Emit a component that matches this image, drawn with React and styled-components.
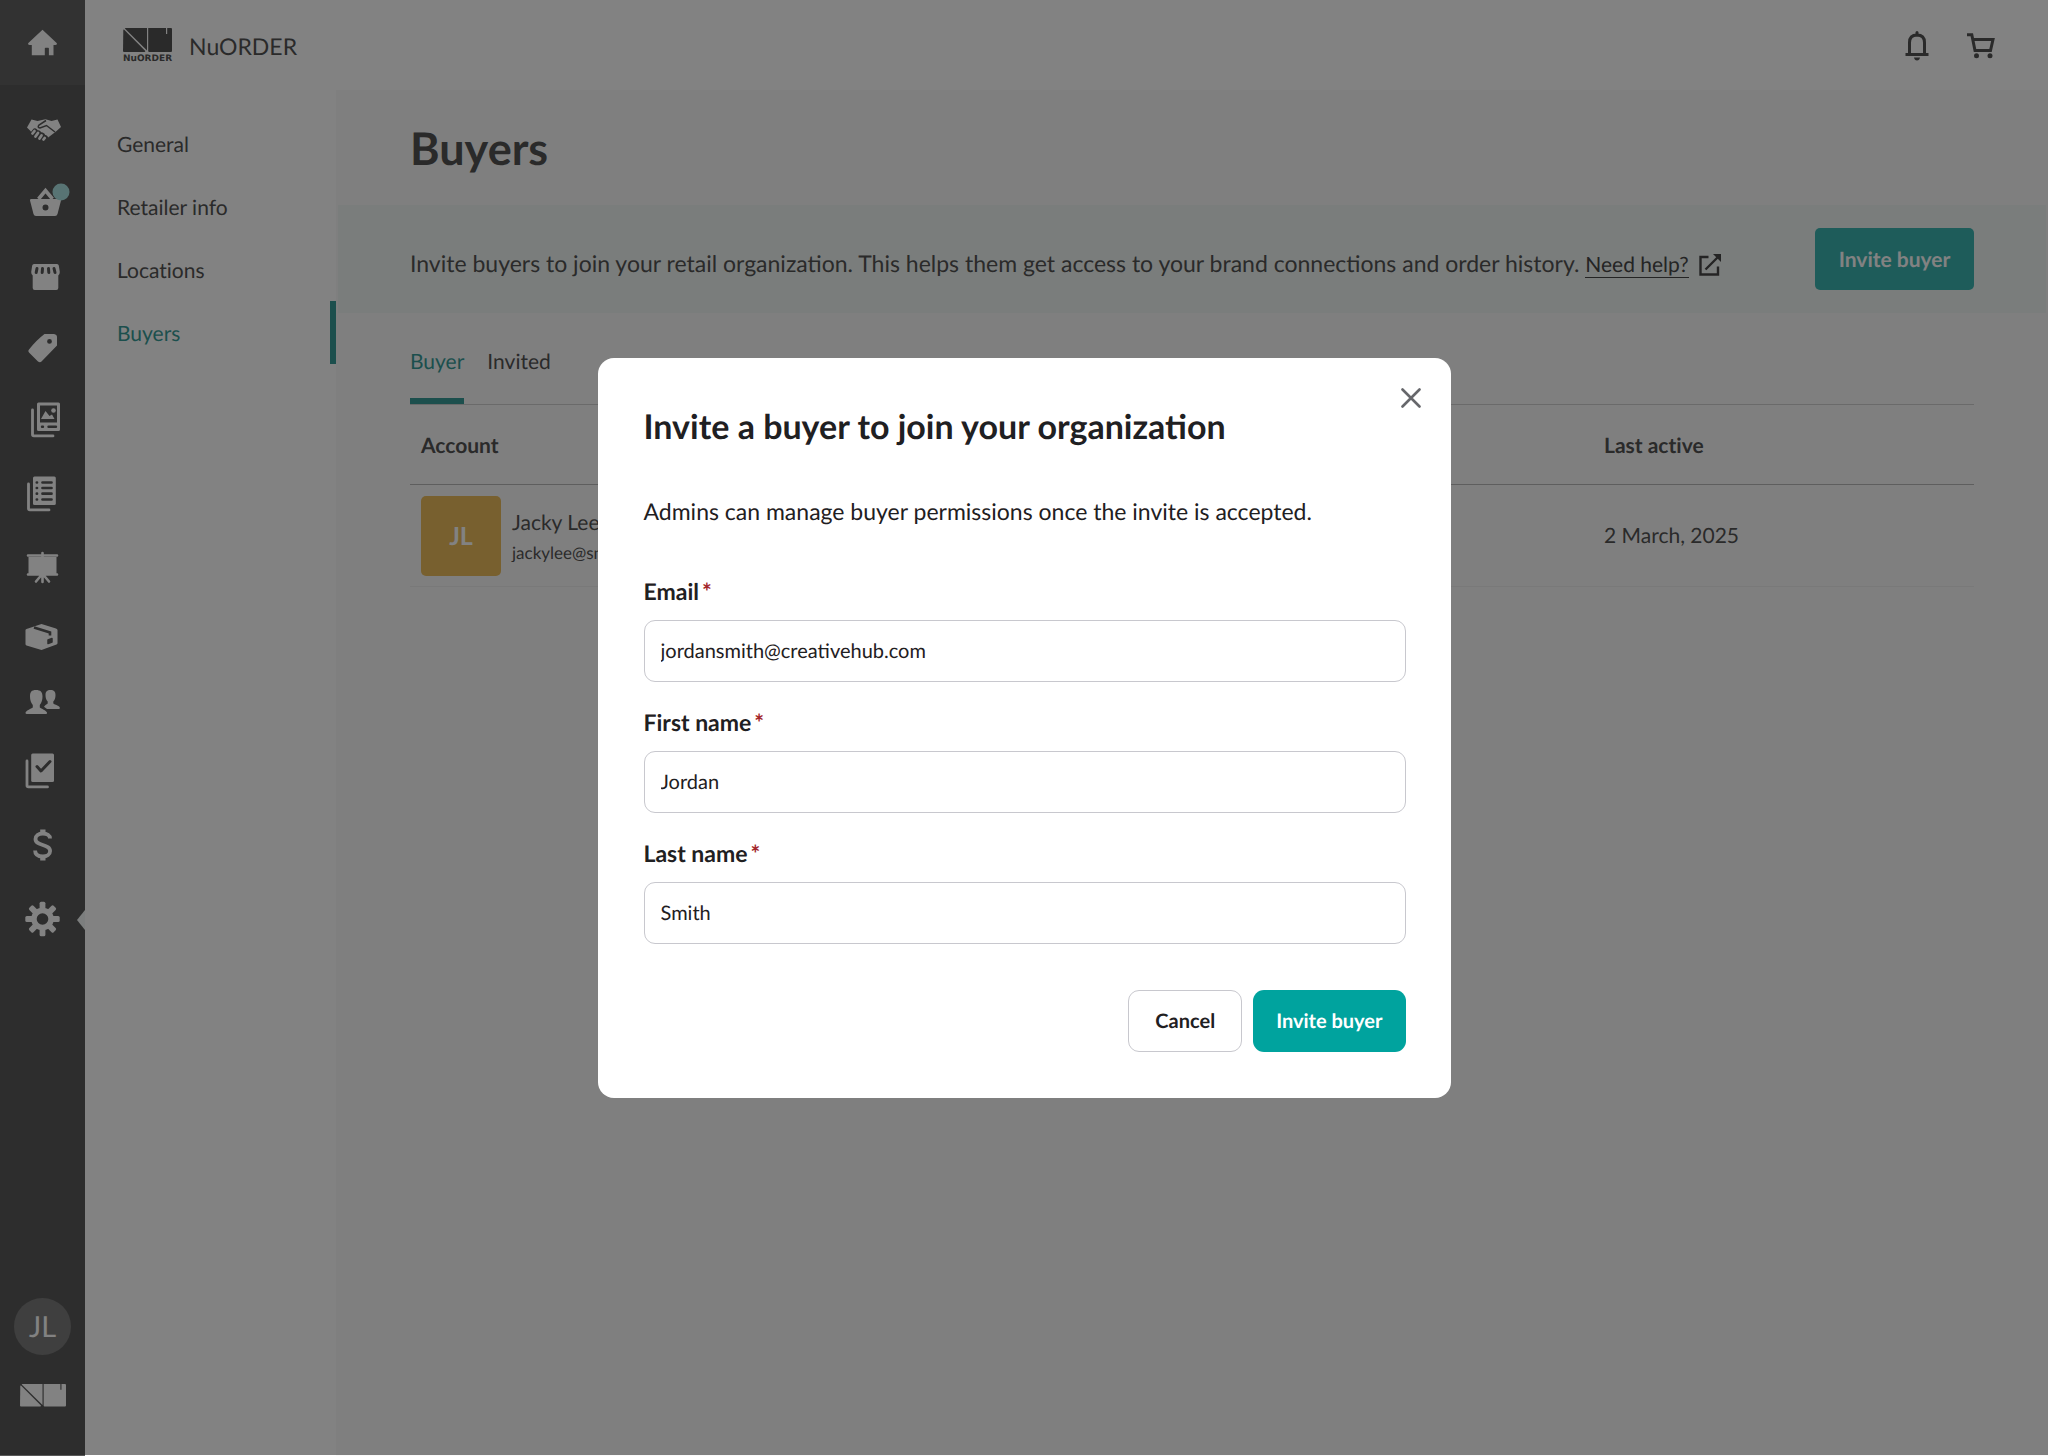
import React, { useState } from "react";
import styled, { createGlobalStyle } from "styled-components";

const color = {
  ink: "#1f2022",
  dimInk: "#545454",
  teal: "#00a39e",
  brand: "#3bb4b0",
  accent: "#389c98",
  rail: "#595959",
  railIcon: "#ffffff",
  line: "#c8c8ce",
};

const GlobalStyle = createGlobalStyle`
  *, *::before, *::after { box-sizing: border-box; }
  body {
    margin: 0;
    font-family: Lato, "Liberation Sans", sans-serif;
    text-rendering: geometricPrecision;
    color: ${color.dimInk};
    background: #fff;
  }
  button, input { font: inherit; color: inherit; text-rendering: inherit; }
  a { color: inherit; text-decoration: none; }
  ul { list-style: none; margin: 0; padding: 0; }
  h1, h2, p { margin: 0; }
`;

const Shell = styled.div`
  display: flex;
  min-height: 100vh;
`;

/* ---------- icon rail ---------- */

const Rail = styled.nav`
  flex: 0 0 85px;
  display: flex;
  flex-direction: column;
  background: ${color.rail};
  color: ${color.railIcon};
`;

const HomeLink = styled.a`
  display: grid;
  place-items: center;
  height: 85px;
  margin-bottom: 9px;
  background: #636363;
`;

const RailLink = styled.a`
  position: relative;
  display: grid;
  place-items: center;
  height: ${(p) => p.$height}px;

  &[aria-current="page"]::after {
    content: "";
    position: absolute;
    right: 0;
    top: 50%;
    border: solid transparent;
    border-width: 10px 8px 10px 0;
    border-right-color: #f4f8f7;
    transform: translateY(-50%);
  }
`;

const RailIcon = styled.svg`
  display: block;
  width: 43px;
  height: 44px;
  overflow: visible;
  fill: currentColor;
`;

const RailFooter = styled.div`
  display: flex;
  flex-direction: column;
  align-items: center;
  gap: 29px;
  margin-top: auto;
  padding-bottom: 49px;
`;

const UserBadge = styled.a`
  display: grid;
  place-items: center;
  width: 57px;
  height: 57px;
  border-radius: 50%;
  background: #7c7c7c;
  font-size: 29px;
`;

const Glyph = ({ children }) => (
  <RailIcon viewBox="-21.5 -22 43 44" aria-hidden="true">
    {children}
  </RailIcon>
);

const HomeIcon = () => (
  <Glyph>
    <path d="M0 -13.2L14.4 0.2Q14.8 2 13 2H11V12.2H6.400V5.500Q6.400 4.800 5.700 4.800H3Q2.300 4.800 2.300 5.500V12.200H-10.700V2H-13Q-14.800 2 -14.400 0.200Z" />
  </Glyph>
);

const HandshakeIcon = () => (
  <Glyph>
    <path d="M-11 -10.500L-5 -9L3 -10.800L9 -9L15 -10.500L18.500 -3L13.500 1.500L3 9.500L1 10.500L-8 6L-12.500 0.500L-15.500 -2.500Z" />
    <path
      d="M3.500 -9.500L-3.500 -5Q-5.500 -2.500 -2.500 -2L4 -4.500L12.500 2"
      fill="none"
      stroke={color.rail}
      strokeWidth="1.500"
    />
    <g stroke={color.rail} strokeWidth="6" strokeLinecap="round">
      <path d="M-7.500 1.500L-9.500 4M-4 3.500L-6 6M-0.500 5.500L-2 8M2.500 8L1.500 9.500" />
    </g>
    <g stroke={color.railIcon} strokeWidth="2.800" strokeLinecap="round">
      <path d="M-8 1L-10 3.500M-4.500 3L-7 6.500M-1 5.500L-3 8.500M2.200 8L1 9.500" />
    </g>
  </Glyph>
);

const BasketIcon = () => (
  <Glyph>
    <path
      d="M-4 -3L3 -11.500L10 -3"
      fill="none"
      stroke="currentColor"
      strokeWidth="3.600"
    />
    <path
      fillRule="evenodd"
      d="M-11.500 -3H17.500Q18.800 -3 18.500 -1.500L15 12Q14.500 14 12.500 14H-6.500Q-8.500 14 -9 12L-12.500 -1.500Q-12.800 -3 -11.500 -3ZM3 2.500A3 3 0 1 0 3 8.500A3 3 0 1 0 3 2.500Z"
    />
    <circle cx="18.500" cy="-10" r="8.500" fill="#ace4e4" />
  </Glyph>
);

const StoreIcon = () => (
  <Glyph>
    <path d="M-8.500 -12H14.500Q16 -12 16.300 -10.500L17.300 -4Q17.300 -1.500 15.800 -0.500V12Q15.800 14 13.800 14H-7.800Q-9.800 14 -9.800 12V-0.500Q-11.300 -1.500 -11.300 -4L-10.300 -10.500Q-10 -12 -8.500 -12Z" />
    <g stroke={color.rail} strokeWidth="3" strokeLinecap="round">
      <path d="M-5.500 -7.500L-6.300 -3.500M0 -7.500L-0.300 -3.500M6 -7.500L6.300 -3.500M11.500 -7.500L12.500 -3.500" />
    </g>
  </Glyph>
);

const TagIcon = () => (
  <Glyph>
    <path
      fillRule="evenodd"
      d="M2 -14H11.500Q14.500 -13.500 14.500 -11V-2.500L-1 13.500Q-2.500 15 -4.500 13.500L-13.500 4.500Q-15 3 -13.500 1.500Q-6 -8 2 -14ZM7 -9A2.400 2.400 0 1 0 7 -4.200A2.400 2.400 0 1 0 7 -9Z"
    />
  </Glyph>
);

const StackBack = ({ x }) => (
  <path
    d={`M${x} -10V14.500Q${x} 15.900 ${x + 1.400} 15.900H${x + 20.500}`}
    fill="none"
    stroke="currentColor"
    strokeWidth="2.800"
    strokeLinecap="round"
  />
);

const LookbookIcon = () => (
  <Glyph>
    <StackBack x={-10} />
    <path
      fillRule="evenodd"
      d="M-4 -17.500H16Q17.500 -17.500 17.500 -16V9.500Q17.500 11 16 11H-4Q-5.500 11 -5.500 9.500V-16Q-5.500 -17.500 -4 -17.500ZM-2.500 -14.500V2.500H14.500V-14.500Z"
    />
    <path d="M-1.500 -1L3 -9L7 -4L9.500 -5.500L12 -1Z" />
    <circle cx="11" cy="-9.500" r="2.300" />
    <path
      d="M-0.500 6.800H0.500M6 6.800H13.500"
      stroke={color.rail}
      strokeWidth="2.400"
      strokeLinecap="round"
    />
  </Glyph>
);

const OrdersIcon = () => (
  <Glyph>
    <StackBack x={-14} />
    <rect x="-9.500" y="-17.500" width="22.800" height="28.500" rx="1.500" />
    <path
      d="M-5.700 -11.500h.2M-5.700 -6h.2M-5.700 -0.300h.2M-5.700 5.500h.2M0 -11.500H9M0 -6H9M0 -0.300H9M0 5.500H9"
      stroke={color.rail}
      strokeWidth="2.700"
      strokeLinecap="round"
    />
  </Glyph>
);

const EaselIcon = () => (
  <Glyph>
    <path d="M-14 -11V6H14V-11Z" />
    <path
      d="M-14.500 -12.500H14.500M-14.500 6.500H14.500M0 -15V14M-1 7L-6.500 13.500M1 7L6.500 13.500"
      stroke="currentColor"
      strokeWidth="2.600"
      strokeLinecap="round"
    />
  </Glyph>
);

const BoxIcon = () => (
  <Glyph>
    <path d="M-16 -9L-1 -14L13.500 -9.500Q15 -9 15 -8V5Q15 6 14 6.500L-1 12L-16 7.500Q-17 7 -17 6V-8Q-17 -8.700 -16 -9Z" />
    <path
      d="M-8.500 -10.500L7.500 -5.500V-2.500"
      fill="none"
      stroke={color.rail}
      strokeWidth="2.600"
    />
    <path
      d="M5.500 2L9.500 0.500V4L5.500 5.500Z"
      fill={color.rail}
      stroke={color.rail}
      strokeWidth="1.500"
      strokeLinejoin="round"
    />
  </Glyph>
);

const PeopleIcon = () => (
  <Glyph>
    <path d="M-6.500 -12C-2 -12 0 -10 0 -5.500C0 -2 -1 1 -2.700 3V5.500C-1 7 3.500 8 4.500 10.500Q4.800 12 3.500 12H-15.500Q-17.200 12 -17 10.500C-16 8 -11.500 7 -9.700 5.500V3C-11.500 1 -12.500 -2 -12.500 -5.500C-12.500 -10 -11 -12 -6.500 -12Z" />
    <path d="M8 -12C11.500 -12 13 -10.500 13 -7C13 -4 12.300 -2 10.800 -0.500V1.500C12.500 2.800 16.500 3.500 17.300 5.500Q17.500 7 16.500 7H4.500L1.500 4.800C2 3.500 4 2.500 5.200 1.500V-0.500C3.700 -2 3 -4 3 -7C3 -10.500 4.500 -12 8 -12Z" />
  </Glyph>
);

const TasksIcon = () => (
  <Glyph>
    <g transform="translate(0 1)">
      <StackBack x={-15.500} />
      <rect x="-11.300" y="-17.500" width="22.800" height="28.500" rx="1.500" />
      <path
        d="M-5.500 -4.500L-1.500 0L7.500 -9.500"
        fill="none"
        stroke={color.rail}
        strokeWidth="3"
        strokeLinecap="round"
        strokeLinejoin="round"
      />
    </g>
  </Glyph>
);

const DollarIcon = () => (
  <Glyph>
    <g transform="translate(0 1)">
      <path
        d="M7.500 -6.500C7.500 -9.500 4.500 -11.500 0.300 -11.500C-4 -11.500 -7 -9.300 -7 -6C-7 1.500 7.600 -1.500 7.600 6C7.600 9.300 4.500 11.500 0.300 11.500C-4.300 11.500 -7.400 9.500 -7.400 5.500"
        fill="none"
        stroke="currentColor"
        strokeWidth="3.800"
      />
      <path d="M-2.300 -15.500H3V-10H-2.300ZM-2.300 10H3V15.500H-2.300Z" />
    </g>
  </Glyph>
);

const GearIcon = () => (
  <Glyph>
    <g transform="translate(0 -1)">
      {[0, 45, 90, 135].map((a) => (
        <rect
          key={a}
          x="-2.900"
          y="-17.200"
          width="5.800"
          height="34.400"
          rx="1.500"
          transform={`rotate(${a})`}
        />
      ))}
      <circle r="11.300" />
      <circle r="5.800" fill={color.rail} />
    </g>
  </Glyph>
);

const RAIL_ITEMS = [
  { label: "Connections", Icon: HandshakeIcon, height: 72 },
  { label: "Shop", Icon: BasketIcon, height: 72 },
  { label: "Marketplace", Icon: StoreIcon, height: 76 },
  { label: "Products", Icon: TagIcon, height: 68 },
  { label: "Lookbooks", Icon: LookbookIcon, height: 76 },
  { label: "Orders", Icon: OrdersIcon, height: 72 },
  { label: "Presentations", Icon: EaselIcon, height: 76 },
  { label: "Inventory", Icon: BoxIcon, height: 64 },
  { label: "Buyers", Icon: PeopleIcon, height: 64 },
  { label: "Tasks", Icon: TasksIcon, height: 72 },
  { label: "Payments", Icon: DollarIcon, height: 76 },
  { label: "Settings", Icon: GearIcon, height: 76, current: true },
];

const MarkSvg = styled.svg`
  display: block;
  width: ${(p) => p.$width}px;
  height: auto;
  fill: currentColor;
`;

const LogoMark = ({ width }) => (
  <MarkSvg $width={width} viewBox="0 0 49 24" aria-hidden="true">
    <path d="M2.500 0H24V22.500L1.800 0.600Z" />
    <path d="M0.300 1.800L1 1.500L22.300 23Q22.300 24 21.500 24H1Q0 24 0 23Z" />
    <path d="M25.200 0H43V6H44.200V0H48Q49 0 49 1V23Q49 24 48 24H26.200Q25.200 24 25.200 23Z" />
  </MarkSvg>
);

/* ---------- header ---------- */

const Page = styled.div`
  flex: 1;
  min-width: 0;
  display: flex;
  flex-direction: column;
`;

const Header = styled.header`
  display: flex;
  align-items: center;
  justify-content: space-between;
  height: 90px;
  padding: 2px 53px 0 38px;
`;

const Brand = styled.a`
  display: flex;
  align-items: center;
  gap: 17px;
  font-size: 23px;
`;

const BrandLogo = styled.span`
  display: grid;
  gap: 3px;
  font: 700 9px/9px "DejaVu Sans", sans-serif;
`;

const HeaderActions = styled.div`
  display: flex;
  align-items: center;
  gap: 38px;
`;

const IconButton = styled.button`
  display: grid;
  place-items: center;
  padding: 0;
  border: 0;
  background: none;
  cursor: pointer;
`;

const LineIcon = styled.svg`
  display: block;
  width: ${(p) => p.width}px;
  height: ${(p) => p.height}px;
  fill: none;
  stroke: currentColor;
  stroke-width: 3;
`;

/* ---------- body ---------- */

const Body = styled.div`
  flex: 1;
  display: flex;
`;

const SideNav = styled.nav`
  flex: 0 0 251px;
  padding-top: 22px;
  font-size: 21px;
  font-variant-ligatures: none;
`;

const SideLink = styled.a`
  display: flex;
  align-items: center;
  height: 63px;
  padding: 2px 26px 0 32px;
  border-right: 6px solid transparent;

  &[aria-current="page"] {
    color: ${color.accent};
    border-right-color: ${color.accent};
  }
`;

const Main = styled.main`
  flex: 1;
  min-width: 0;
  background: #fafafa;
  font-size: 21px;
`;

const Title = styled.h1`
  padding: 31px 74px 30px;
  font-size: 45px;
  line-height: 54px;
`;

const Banner = styled.section`
  display: flex;
  align-items: center;
  justify-content: space-between;
  height: 108px;
  margin: 0 2px;
  padding: 0 72px;
  background: #f0f5f3;
`;

const BannerText = styled.p`
  font-size: 23px;
  padding-top: 8px;
`;

const HelpLink = styled.a`
  display: inline-flex;
  align-items: center;
  gap: 10px;
  font-size: 21px;
  color: #484848;
`;

const HelpLabel = styled.span`
  border-bottom: 1px solid currentColor;
`;

const BannerButton = styled.button`
  width: 159px;
  height: 62px;
  padding: 0;
  border: 0;
  border-radius: 5px;
  background: ${color.brand};
  color: #fff;
  font-size: 21px;
  font-weight: 700;
`;

const Content = styled.section`
  padding: 0 74px;
`;

const Tabs = styled.div`
  display: flex;
  gap: 23px;
  height: 92px;
  border-bottom: 1px solid #d0d0d0;
`;

const Tab = styled.button`
  padding: 11px 0 0;
  border: 0;
  border-bottom: 6px solid transparent;
  background: none;
  cursor: pointer;

  &[aria-selected="true"] {
    color: ${color.accent};
    border-bottom-color: ${color.accent};
  }
`;

const Table = styled.table`
  width: 100%;
  border-collapse: collapse;
  table-layout: fixed;
`;

const HeadCell = styled.th`
  height: 79px;
  padding: 2px 11px 0;
  text-align: left;
  border-bottom: 1px solid #b8b8b8;
  font-variant-ligatures: none;
`;

const ActiveHead = styled(HeadCell)`
  width: 381px;
`;

const Cell = styled.td`
  padding: 11px 11px 10px;
  border-bottom: 1px solid #ededed;
`;

const Account = styled.div`
  display: flex;
  align-items: center;
  gap: 11px;
`;

const Avatar = styled.div`
  display: grid;
  place-items: center;
  width: 80px;
  height: 80px;
  border-radius: 5px;
  background: #ebbc5c;
  color: #fff;
  font-size: 25px;
  font-weight: 700;
`;

const AccountText = styled.div`
  display: grid;
  gap: 2px;
  padding-top: 4px;
  line-height: 28px;
`;

const AccountEmail = styled.span`
  font-size: 17px;
`;

/* ---------- dialog ---------- */

const Backdrop = styled.div`
  position: fixed;
  inset: 0 0 1px;
  display: flex;
  align-items: center;
  justify-content: center;
  background: rgba(0, 0, 0, 0.49);
`;

const Dialog = styled.form`
  position: relative;
  width: 853px;
  max-width: 100%;
  padding: 46px 45px 46px 46px;
  border-radius: 16px;
  background: #fff;
  color: ${color.ink};
`;

const CloseButton = styled(IconButton)`
  position: absolute;
  top: 24px;
  right: 24px;
  width: 32px;
  height: 32px;
  color: #66676b;
`;

const DialogTitle = styled.h2`
  font-size: 34px;
  line-height: 46px;
`;

const DialogText = styled.p`
  padding: 47px 0 52px;
  font-size: 23px;
  line-height: 28px;
`;

const Fields = styled.div`
  display: grid;
  gap: 26px;
`;

const Field = styled.div`
  display: grid;
  gap: 15px;
`;

const Label = styled.label`
  font-size: 23px;
  font-weight: 700;
  line-height: 28px;
`;

const Required = styled.span`
  margin-left: 3px;
  color: #a3262a;
`;

const TextInput = styled.input`
  width: 100%;
  height: 62px;
  padding: 0 16px;
  border: 1px solid ${color.line};
  border-radius: 11px;
  background: #fff;
  font-size: 20px;
  outline: none;

  &:focus-visible {
    border-color: ${color.teal};
  }
`;

const Actions = styled.div`
  display: flex;
  justify-content: flex-end;
  gap: 11px;
  padding-top: 46px;
`;

const Button = styled.button`
  height: 62px;
  padding: 0 ${(p) => (p.$primary ? 23 : 26)}px;
  border: ${(p) => (p.$primary ? "0" : `1px solid ${color.line}`)};
  border-radius: 11px;
  background: ${(p) => (p.$primary ? color.teal : "#fff")};
  color: ${(p) => (p.$primary ? "#fff" : color.ink)};
  font-size: 20px;
  font-weight: 700;
  cursor: pointer;
`;

const NAV = ["General", "Retailer info", "Locations", "Buyers"];

const FIELDS = [
  { id: "email", label: "Email", type: "text", value: "jordansmith@creativehub.com" },
  { id: "firstName", label: "First name", type: "text", value: "Jordan" },
  { id: "lastName", label: "Last name", type: "text", value: "Smith" },
];

function InviteDialog() {
  const [values, setValues] = useState(
    Object.fromEntries(FIELDS.map((f) => [f.id, f.value]))
  );
  return (
    <Backdrop>
      <Dialog
        role="dialog"
        aria-modal="true"
        aria-labelledby="invite-title"
        onSubmit={(e) => e.preventDefault()}
      >
        <CloseButton type="button" aria-label="Close">
          <LineIcon width={20} height={20} viewBox="0 0 20 20">
            <path d="M1.500 1.500L18.500 18.500M18.500 1.500L1.500 18.500" strokeWidth="2.600" strokeLinecap="round" />
          </LineIcon>
        </CloseButton>
        <DialogTitle id="invite-title">Invite a buyer to join your organization</DialogTitle>
        <DialogText>Admins can manage buyer permissions once the invite is accepted.</DialogText>
        <Fields>
          {FIELDS.map((f) => (
            <Field key={f.id}>
              <Label htmlFor={f.id}>
                {f.label}
                <Required>*</Required>
              </Label>
              <TextInput
                id={f.id}
                type={f.type}
                value={values[f.id]}
                onChange={(e) => setValues({ ...values, [f.id]: e.target.value })}
              />
            </Field>
          ))}
        </Fields>
        <Actions>
          <Button type="button">Cancel</Button>
          <Button type="submit" $primary>
            Invite buyer
          </Button>
        </Actions>
      </Dialog>
    </Backdrop>
  );
}

export default function App() {
  return (
    <>
      <GlobalStyle />
      <Shell>
        <Rail aria-label="Primary">
          <HomeLink href="#home" aria-label="Home">
            <HomeIcon />
          </HomeLink>
          {RAIL_ITEMS.map(({ label, Icon, height, current }) => (
            <RailLink
              key={label}
              href="#"
              aria-label={label}
              aria-current={current ? "page" : undefined}
              $height={height}
            >
              <Icon />
            </RailLink>
          ))}
          <RailFooter>
            <UserBadge href="#profile">JL</UserBadge>
            <LogoMark width={46} />
          </RailFooter>
        </Rail>
        <Page>
          <Header>
            <Brand href="#">
              <BrandLogo>
                <LogoMark width={49} />
                NuORDER
              </BrandLogo>
              NuORDER
            </Brand>
            <HeaderActions>
              <IconButton aria-label="Notifications">
                <LineIcon width={24} height={30} viewBox="0 0 24 30">
                  <path d="M4.500 22V11.500C4.500 6.500 7.500 4 12 4S19.500 6.500 19.500 11.500V22M0.500 23.500H23.500" />
                  <path d="M12 1.500V4" strokeLinecap="round" />
                  <path d="M9 26.500H15Q14.500 29.500 12 29.500T9 26.500Z" fill="currentColor" stroke="none" />
                </LineIcon>
              </IconButton>
              <IconButton aria-label="Cart">
                <LineIcon width={28} height={26} viewBox="0 0 28 26">
                  <path d="M0 1.800H4.800L8 17.500H23.500L26 6.500H6" />
                  <circle cx="9.500" cy="22.800" r="2.500" fill="currentColor" stroke="none" />
                  <circle cx="23" cy="22.800" r="2.500" fill="currentColor" stroke="none" />
                </LineIcon>
              </IconButton>
            </HeaderActions>
          </Header>
          <Body>
            <SideNav aria-label="Settings">
              <ul>
                {NAV.map((name) => (
                  <li key={name}>
                    <SideLink href="#" aria-current={name === "Buyers" ? "page" : undefined}>
                      {name}
                    </SideLink>
                  </li>
                ))}
              </ul>
            </SideNav>
            <Main>
              <Title>Buyers</Title>
              <Banner>
                <BannerText>
                  Invite buyers to join your retail organization. This helps them get access to your
                  brand connections and order history.{" "}
                  <HelpLink href="#help">
                    <HelpLabel>Need help?</HelpLabel>
                    <LineIcon width={22} height={22} viewBox="0 0 22 22" aria-hidden="true">
                      <path d="M9.500 3H1.500V20.500H19V12.500M6.500 15.500L19.500 2.500" strokeWidth="2.400" />
                      <path d="M14 0H22V8Z" fill="currentColor" stroke="none" />
                    </LineIcon>
                  </HelpLink>
                </BannerText>
                <BannerButton>Invite buyer</BannerButton>
              </Banner>
              <Content>
                <Tabs role="tablist">
                  <Tab role="tab" aria-selected="true">
                    Buyer
                  </Tab>
                  <Tab role="tab" aria-selected="false">
                    Invited
                  </Tab>
                </Tabs>
                <Table>
                  <thead>
                    <tr>
                      <HeadCell scope="col">Account</HeadCell>
                      <ActiveHead scope="col">Last active</ActiveHead>
                    </tr>
                  </thead>
                  <tbody>
                    <tr>
                      <Cell>
                        <Account>
                          <Avatar aria-hidden="true">JL</Avatar>
                          <AccountText>
                            <span>Jacky Lee</span>
                            <AccountEmail>jackylee@sm</AccountEmail>
                          </AccountText>
                        </Account>
                      </Cell>
                      <Cell>2 March, 2025</Cell>
                    </tr>
                  </tbody>
                </Table>
              </Content>
            </Main>
          </Body>
        </Page>
      </Shell>
      <InviteDialog />
    </>
  );
}
